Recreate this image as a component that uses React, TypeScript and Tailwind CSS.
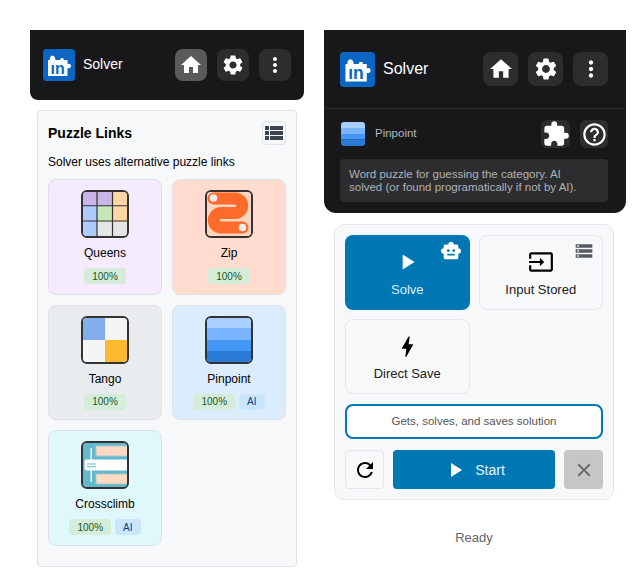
import { ReactNode } from "react";
import {
  MdBolt,
  MdClose,
  MdExtension,
  MdHelpOutline,
  MdHome,
  MdInput,
  MdMoreVert,
  MdPlayArrow,
  MdRefresh,
  MdSettings,
  MdSmartToy,
  MdStorage,
  MdViewList,
} from "react-icons/md";

function Logo({ className }: { className: string }) {
  return (
    <svg viewBox="0 0 32 32" className={className}>
      <rect width="32" height="32" rx="3" fill="#0a66c2" />
      <path
        d="M5 11h2.500a2.600 2.600 0 1 1 4 0H17a2 2 0 0 1 4 0h3.500v4a2.300 2.300 0 0 1 3.500 2 2.300 2.300 0 0 1-3.500 2v8H5z"
        fill="#fff"
      />
      <text x="7.500" y="25" fontFamily="Liberation Sans" fontWeight="700" fontSize="16" fill="#0a66c2">
        in
      </text>
      <rect x="7" y="10" width="5.500" height="4.800" fill="#fff" />
    </svg>
  );
}

function PuzzleIcon({ children, small }: { children: ReactNode; small?: boolean }) {
  return (
    <div
      className={
        small
          ? "w-6 h-6 rounded-[3px] overflow-hidden shrink-0"
          : "w-12 h-12 rounded-[6px] border-2 border-[#333] overflow-hidden shrink-0"
      }
    >
      <svg viewBox={small ? "0 0 48 48" : "2 2 44 44"} className="w-full h-full block">
        {children}
      </svg>
    </div>
  );
}

const Queens = (
  <>
    <rect width="48" height="48" fill="#e5e5e5" />
    <rect x="0" y="0" width="32" height="16" fill="#c9b5e8" />
    <rect x="32" y="0" width="16" height="32" fill="#ffd6a5" />
    <rect x="0" y="16" width="16" height="32" fill="#aecbff" />
    <rect x="16" y="16" width="16" height="16" fill="#c5e8b7" />
    <path d="M16 0v48M31.500 0v48M0 15.750h48M0 31h48" stroke="#333" strokeWidth="1.200" />
  </>
);

const Zip = (
  <>
    <rect width="48" height="48" fill="#ffd5c2" />
    <path
      d="M8.500 8.500H30a7.250 7.250 0 0 1 0 14.500H16a7.250 7.250 0 0 0 0 14.500h21.500"
      fill="none"
      stroke="#ff6b2b"
      strokeWidth="12"
      strokeLinecap="round"
    />
    <circle cx="8.500" cy="8" r="3.800" fill="#eeeeee" />
    <circle cx="37.500" cy="37.500" r="3.800" fill="#eeeeee" />
  </>
);

const Tango = (
  <>
    <rect width="48" height="48" fill="#f5f5f5" />
    <rect width="24" height="24" fill="#82aeee" />
    <rect x="24" y="24" width="24" height="24" fill="#ffb92e" />
  </>
);

const Pinpoint = (
  <>
    <rect width="48" height="12" fill="#a8cfff" />
    <rect y="12" width="48" height="12" fill="#7ab3ff" />
    <rect y="24" width="48" height="11" fill="#4597f5" />
    <rect y="35" width="48" height="13" fill="#2a7ad8" />
  </>
);

const Crossclimb = (
  <>
    <rect width="48" height="48" fill="#62b9cc" />
    <rect x="15" y="5" width="33" height="10" fill="#ffd9c4" stroke="#a9c9c9" />
    <rect x="15" y="33" width="33" height="10" fill="#ffd9c4" stroke="#a9c9c9" />
    <rect x="9.500" y="7" width="1.500" height="34" fill="#fff" />
    <rect x="3.500" y="18.500" width="46" height="11" rx="2" fill="#fff" />
    <path d="M6 23h9M6 25.800h9" stroke="#62b9cc" strokeWidth="1" />
  </>
);

function Badge({ children, ai }: { children: ReactNode; ai?: boolean }) {
  return (
    <span
      className={`h-4 flex items-center rounded-[4px] text-[10px] ${
        ai ? "px-2 bg-[#cce5ff] text-[#004085]" : "px-[8px] min-w-10 justify-center bg-[#d4edda] text-[#155724]"
      }`}
    >
      {children}
    </span>
  );
}

function PuzzleTile({ name, bg, icon, ai }: { name: string; bg: string; icon: ReactNode; ai?: boolean }) {
  return (
    <div className={`h-[115.500px] rounded-lg border border-[#dfe1e6] flex flex-col items-center pt-[10px] ${bg}`}>
      <PuzzleIcon>{icon}</PuzzleIcon>
      <div className="text-xs text-black leading-[14px] mt-2">{name}</div>
      <div className="flex gap-1 mt-[8px]">
        <Badge>100%</Badge>
        {ai && <Badge ai>AI</Badge>}
      </div>
    </div>
  );
}

function ActionTile({
  label,
  active,
  icon,
  corner,
}: {
  label: string;
  active?: boolean;
  icon: ReactNode;
  corner?: ReactNode;
}) {
  return (
    <div
      className={`relative h-[75px] rounded-lg flex flex-col items-center ${
        active ? "pt-[15px] bg-[#0077b5] text-[#dff1fa]" : "pt-[14px] border border-[#e4e6ea] bg-[#f7f8fa] text-[#222]"
      }`}
    >
      <div className="h-6 flex items-center justify-center">{icon}</div>
      <div className="text-[13px] leading-[14px] mt-[9px]">{label}</div>
      {corner && <div className="absolute top-[5px] right-[8px]">{corner}</div>}
    </div>
  );
}

export default function App() {
  return (
    <div className="w-[636px] h-[584px] bg-white flex items-start pt-[30px] pl-[30px] gap-5 font-['Liberation_Sans',Arial,sans-serif]">
      {/* left: popup home */}
      <div className="w-[274px] shrink-0">
        <div className="h-[70px] bg-[#18181a] rounded-b-lg flex items-center justify-between px-[13px]">
          <div className="flex items-center gap-2">
            <Logo className="w-8 h-8 rounded-[3px]" />
            <span className="text-sm text-white mb-[2px]">Solver</span>
          </div>
          <div className="flex gap-[10px]">
            <div className="w-8 h-8 rounded-lg bg-[#5a5a5c] flex items-center justify-center text-white">
              <MdHome size={24} />
            </div>
            <div className="w-8 h-8 rounded-lg bg-[#2d2d2f] flex items-center justify-center text-white">
              <MdSettings size={24} />
            </div>
            <div className="w-8 h-8 rounded-lg bg-[#2d2d2f] flex items-center justify-center text-white">
              <MdMoreVert size={24} />
            </div>
          </div>
        </div>

        <div className="mt-[10px] mx-[7px] h-[457px] bg-[#f7f8fa] border border-[#e1e3e8] rounded-[4px] px-[10px] pt-[10px]">
          <div className="flex items-center justify-between h-6">
            <div className="text-sm font-bold text-black">Puzzle Links</div>
            <div className="w-6 h-6 border border-[#e1e3e8] rounded-[4px] bg-[#f7f8fa] flex items-center justify-center text-[#3c4450]">
              <MdViewList size={24} className="shrink-0" />
            </div>
          </div>
          <div className="text-xs text-black leading-[14px] mt-[10px]">Solver uses alternative puzzle links</div>
          <div className="grid grid-cols-2 gap-[10px] mt-[10px]">
            <PuzzleTile name="Queens" bg="bg-[#f4ecfe]" icon={Queens} />
            <PuzzleTile name="Zip" bg="bg-[#ffdccd]" icon={Zip} />
            <PuzzleTile name="Tango" bg="bg-[#e9ecef]" icon={Tango} />
            <PuzzleTile name="Pinpoint" bg="bg-[#dcecff]" icon={Pinpoint} ai />
            <PuzzleTile name="Crossclimb" bg="bg-[#dff8fc]" icon={Crossclimb} ai />
          </div>
        </div>
      </div>

      {/* right: puzzle page */}
      <div className="w-[302px] shrink-0">
        <div className="h-[183px] bg-[#18181a] rounded-b-xl">
          <div className="h-[79px] flex items-center justify-between pl-4 pr-[18px] border-b border-[#2e2e30]">
            <div className="flex items-center gap-2">
              <Logo className="w-[35px] h-[35px] rounded-[3px]" />
              <span className="text-base text-white">Solver</span>
            </div>
            <div className="flex gap-[10px]">
              <div className="w-[35px] h-[34px] rounded-lg bg-[#2d2d2f] flex items-center justify-center text-white">
                <MdHome size={26} />
              </div>
              <div className="w-[35px] h-[34px] rounded-lg bg-[#2d2d2f] flex items-center justify-center text-white">
                <MdSettings size={26} />
              </div>
              <div className="w-[35px] h-[34px] rounded-lg bg-[#2d2d2f] flex items-center justify-center text-white">
                <MdMoreVert size={26} />
              </div>
            </div>
          </div>
          <div className="flex items-center pl-[17px] pr-[18px] mt-[11px] h-[28px]">
            <PuzzleIcon small>{Pinpoint}</PuzzleIcon>
            <span className="ml-[10px] text-[11.500px] text-[#b4b8bf]">Pinpoint</span>
            <div className="ml-auto flex gap-[10px]">
              <div className="w-[29px] h-[28px] rounded-md bg-[#2d2d2f] flex items-center justify-center text-white">
                <MdExtension size={28} className="shrink-0" />
              </div>
              <div className="w-[28px] h-[28px] rounded-md bg-[#2d2d2f] flex items-center justify-center text-white">
                <MdHelpOutline size={27} className="shrink-0" />
              </div>
            </div>
          </div>
          <div className="ml-4 mr-[18px] mt-[11px] h-[43px] rounded-[4px] bg-[#2d2d2f] pl-[9px] pr-[24px] pt-[9px] text-[11.500px] leading-[13px] text-[#aeb2b8]">
            Word puzzle for guessing the category. AI solved (or found programatically if not by AI).
          </div>
        </div>

        <div className="mt-[11px] ml-[10px] w-[280px] h-[276px] bg-[#f7f8fa] border border-[#e4e6ea] rounded-[10px] px-[10px] pt-[10px]">
          <div className="grid grid-cols-2 gap-[9px]">
            <ActionTile
              label="Solve"
              active
              icon={<MdPlayArrow size={26} className="text-white" />}
              corner={<MdSmartToy size={22} className="text-white" />}
            />
            <ActionTile
              label="Input Stored"
              icon={<MdInput size={26} className="text-black" />}
              corner={<MdStorage size={20} className="text-[#555b63]" />}
            />
            <ActionTile label="Direct Save" icon={<MdBolt size={27} className="text-black" />} />
          </div>
          <div className="mt-[10px] h-[35px] rounded-lg border-2 border-[#0077b5] bg-white flex items-center justify-center text-[11.500px] text-[#555]">
            Gets, solves, and saves solution
          </div>
          <div className="mt-[11px] flex gap-[9px]">
            <div className="w-[39px] h-[39px] rounded-[4px] border border-[#e4e6ea] flex items-center justify-center text-black">
              <MdRefresh size={24} />
            </div>
            <div className="flex-1 h-[39px] rounded-[4px] bg-[#0077b5] flex items-center justify-center gap-2 text-sm text-[#e6f4fb]">
              <MdPlayArrow size={24} className="text-white" />
              Start
            </div>
            <div className="w-[39px] h-[39px] rounded-[4px] bg-[#c6c6c6] flex items-center justify-center text-[#666]">
              <MdClose size={22} />
            </div>
          </div>
        </div>

        <div className="mt-[31px] text-center text-[13px] leading-[14px] text-[#666] ml-[-2px]">Ready</div>
      </div>
    </div>
  );
}
